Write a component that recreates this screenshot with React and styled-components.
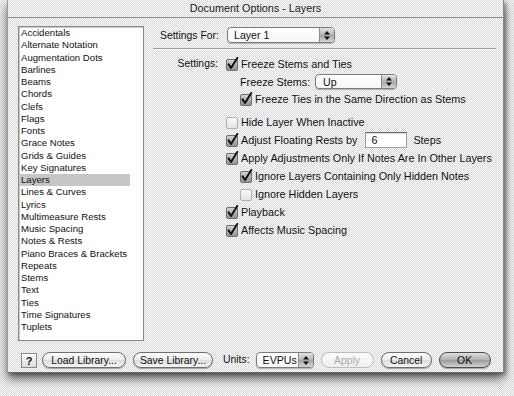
import React from "react";
import styled, { createGlobalStyle, css } from "styled-components";

const GlobalStyle = createGlobalStyle`
  html, body {
    margin: 0;
    padding: 0;
  }
  body {
    background-color: #fff;
    background-image: repeating-conic-gradient(#d2d2d2 0 25%, #fff 0 50%);
    background-size: 2px 2px;
    font-family: "Liberation Sans", Arial, sans-serif;
    color: #111;
  }
`;

const Desktop = styled.div`
  width: 514px;
  height: 396px;
  padding: 0 10px 0 7px;
  box-sizing: border-box;
`;

const Window = styled.div`
  width: 497px;
  height: 373px;
  box-sizing: border-box;
  display: flex;
  flex-direction: column;
  border-left: 1px solid #9a9a9a;
  border-right: 1px solid #8a8a8a;
  border-bottom: 1px solid #6a6a6a;
  background-color: #fff;
  background-image: repeating-conic-gradient(#d6d6d6 0 25%, #fff 0 50%);
  background-size: 2px 2px;
  box-shadow: 0 6px 10px rgba(0, 0, 0, 0.55), 2px 2px 4px rgba(0, 0, 0, 0.35);
`;

const TitleBar = styled.div`
  height: 18px;
  flex: none;
  box-sizing: border-box;
  border-bottom: 1px solid #8e8e8e;
  display: flex;
  align-items: center;
  justify-content: center;
  font-size: 10.8px;
  color: #1a1a1a;
  padding-bottom: 1px;
`;

const Main = styled.div`
  height: 323px;
  flex: none;
  box-sizing: border-box;
  display: flex;
  padding: 8px 7px 0 10px;
`;

const CategoryList = styled.div`
  width: 126px;
  height: 315px;
  box-sizing: border-box;
  background: #fff;
  border: 1px solid #8a8a8a;
  box-shadow: inset 1px 1px 0 #c8c8c8, 1px 1px 0 #e8e8e8;
  padding-top: 0;
  flex: none;
`;

const ListItem = styled.div`
  width: 111px;
  height: 12.25px;
  line-height: 12.25px;
  padding-left: 2px;
  box-sizing: border-box;
  font-size: 9.6px;
  white-space: nowrap;
  color: #111;
  ${(p) =>
    p.$selected &&
    css`
      background: #c6c6c6;
    `}
`;

const Panel = styled.div`
  flex: 1;
  margin-left: 9px;
  display: flex;
  flex-direction: column;
`;

const TopRow = styled.div`
  display: flex;
  align-items: center;
  height: 16px;
  margin-top: 1px;
  padding-left: 7px;
  font-size: 10.4px;
`;

const TopLabel = styled.span`
  width: 67px;
`;

const Separator = styled.div`
  height: 1px;
  margin-top: 5px;
  background: #9a9a9a;
  box-shadow: 0 1px 0 #fafafa;
`;

const SettingsGrid = styled.div`
  display: grid;
  grid-template-columns: 65px 1fr;
  column-gap: 8px;
  margin-top: 6px;
  font-size: 10.8px;
`;

const SideLabel = styled.div`
  text-align: right;
  height: 18px;
  line-height: 18px;
  font-size: 10.4px;
`;

const Options = styled.div`
  display: flex;
  flex-direction: column;
`;

const Row = styled.div`
  display: flex;
  align-items: center;
  height: ${(p) => p.$h || 18}px;
  margin-top: ${(p) => p.$gap || 0}px;
  padding-left: ${(p) => (p.$indent ? 14 : 0)}px;
  white-space: nowrap;
`;

const CheckLabel = styled.span`
  margin-left: 2px;
`;

const PopLabel = styled.span`
  width: 75px;
`;

const PopUpBox = styled.div`
  position: relative;
  width: ${(p) => p.$w}px;
  height: ${(p) => p.$h || 16}px;
  box-sizing: border-box;
  border: 1px solid #7c7c7c;
  border-radius: 4px;
  background: linear-gradient(#ffffff, #f6f6f6);
  box-shadow: 0 1px 1px rgba(0, 0, 0, 0.25);
  display: flex;
  align-items: center;
  overflow: hidden;
  font-size: 10.6px;
`;

const PopText = styled.span`
  flex: 1;
  padding-left: ${(p) => p.$pad || 6}px;
`;

const PopArrows = styled.div`
  width: 14px;
  height: 100%;
  border-left: 1px solid #8a8a8a;
  background: linear-gradient(#e4e4e4, #b4b4b4 50%, #a6a6a6 51%, #d4d4d4);
  display: flex;
  align-items: center;
  justify-content: center;
`;

const StepsInput = styled.div`
  width: 42px;
  height: 16px;
  box-sizing: border-box;
  border: 1px solid #a0a0a0;
  border-top-color: #6c6c6c;
  background: #fff;
  box-shadow: inset 0 1px 1px rgba(0, 0, 0, 0.15);
  padding-left: 5px;
  line-height: 14px;
  margin: 0 6px 0 8px;
`;

const Footer = styled.div`
  flex: 1;
  display: flex;
  align-items: flex-start;
  padding: 11px 0 0 13px;
  gap: 7px;
  font-size: 10.4px;
`;

const HelpButton = styled.div`
  width: 16px;
  height: 15px;
  box-sizing: border-box;
  border: 1px solid #8a8a8a;
  background: linear-gradient(#ffffff, #dcdcdc);
  font-weight: bold;
  font-size: 11px;
  display: flex;
  align-items: center;
  justify-content: center;
  margin-right: -2px;
  margin-top: 1px;
`;

const Button = styled.div`
  width: ${(p) => p.$w}px;
  height: 16px;
  box-sizing: border-box;
  border-radius: 8px;
  border: 1px solid #6e6e6e;
  background: linear-gradient(#fdfdfd, #ececec 50%, #dcdcdc 51%, #f6f6f6);
  box-shadow: 0 1px 1px rgba(0, 0, 0, 0.3);
  display: flex;
  align-items: center;
  justify-content: center;
  color: #111;
  ${(p) =>
    p.$disabled &&
    css`
      border-color: #bdbdbd;
      color: #a9a9a9;
      box-shadow: none;
      background: linear-gradient(#fbfbfb, #efefef);
    `}
  ${(p) =>
    p.$default &&
    css`
      border-color: #4e4e4e;
      background: linear-gradient(#dedede, #b0b0b0 50%, #9c9c9c 51%, #d0d0d0);
    `}
`;

const UnitsLabel = styled.span`
  margin-left: 3px;
  height: 16px;
  line-height: 16px;
  margin-right: -1px;
`;

const CheckBox = ({ checked }) => (
  <svg width="13" height="14" viewBox="0 0 13 14" style={{ flex: "none" }}>
    <defs>
      <linearGradient id="cbOn" x1="0" y1="0" x2="0" y2="1">
        <stop offset="0" stopColor="#d6d6d6" />
        <stop offset="1" stopColor="#8e8e8e" />
      </linearGradient>
      <linearGradient id="cbOff" x1="0" y1="0" x2="0" y2="1">
        <stop offset="0" stopColor="#fcfcfc" />
        <stop offset="1" stopColor="#e2e2e2" />
      </linearGradient>
    </defs>
    <rect
      x="0.5"
      y="2.5"
      width="11"
      height="11"
      rx="1.5"
      fill={checked ? "url(#cbOn)" : "url(#cbOff)"}
      stroke={checked ? "#6e6e6e" : "#b0b0b0"}
    />
    {checked && (
      <path
        d="M2.6 7.4 L5 11 L11.3 1"
        fill="none"
        stroke="#111"
        strokeWidth="2"
        strokeLinecap="round"
        strokeLinejoin="round"
      />
    )}
  </svg>
);

const Arrows = () => (
  <svg width="6" height="9" viewBox="0 0 6 9">
    <path d="M3 0 L6 3.5 L0 3.5 Z" fill="#111" />
    <path d="M3 9 L6 5.5 L0 5.5 Z" fill="#111" />
  </svg>
);

const PopUp = ({ value, w, h, pad }) => (
  <PopUpBox $w={w} $h={h}>
    <PopText $pad={pad}>{value}</PopText>
    <PopArrows>
      <Arrows />
    </PopArrows>
  </PopUpBox>
);

const Check = ({ checked, label, indent, gap, h }) => (
  <Row $indent={indent} $gap={gap} $h={h}>
    <CheckBox checked={checked} />
    <CheckLabel>{label}</CheckLabel>
  </Row>
);

const categories = [
  "Accidentals",
  "Alternate Notation",
  "Augmentation Dots",
  "Barlines",
  "Beams",
  "Chords",
  "Clefs",
  "Flags",
  "Fonts",
  "Grace Notes",
  "Grids & Guides",
  "Key Signatures",
  "Layers",
  "Lines & Curves",
  "Lyrics",
  "Multimeasure Rests",
  "Music Spacing",
  "Notes & Rests",
  "Piano Braces & Brackets",
  "Repeats",
  "Stems",
  "Text",
  "Ties",
  "Time Signatures",
  "Tuplets",
];

export default function App() {
  return (
    <>
      <GlobalStyle />
      <Desktop>
        <Window>
          <TitleBar>Document Options - Layers</TitleBar>
          <Main>
            <CategoryList>
              {categories.map((c) => (
                <ListItem key={c} $selected={c === "Layers"}>
                  {c}
                </ListItem>
              ))}
            </CategoryList>
            <Panel>
              <TopRow>
                <TopLabel>Settings For:</TopLabel>
                <PopUp value="Layer 1" w={108} />
              </TopRow>
              <Separator />
              <SettingsGrid>
                <SideLabel>Settings:</SideLabel>
                <Options>
                  <Check checked label="Freeze Stems and Ties" />
                  <Row $indent $h={17}>
                    <PopLabel>Freeze Stems:</PopLabel>
                    <PopUp value="Up" w={82} h={15} pad={7} />
                  </Row>
                  <Check checked indent label="Freeze Ties in the Same Direction as Stems" />
                  <Check label="Hide Layer When Inactive" gap={5} />
                  <Row>
                    <CheckBox checked />
                    <CheckLabel>Adjust Floating Rests by</CheckLabel>
                    <StepsInput>6</StepsInput>
                    <span>Steps</span>
                  </Row>
                  <Check checked label="Apply Adjustments Only If Notes Are In Other Layers" />
                  <Check checked indent label="Ignore Layers Containing Only Hidden Notes" />
                  <Check indent label="Ignore Hidden Layers" />
                  <Check checked label="Playback" />
                  <Check checked label="Affects Music Spacing" />
                </Options>
              </SettingsGrid>
            </Panel>
          </Main>
          <Footer>
            <HelpButton>?</HelpButton>
            <Button $w={84}>Load Library...</Button>
            <Button $w={80}>Save Library...</Button>
            <UnitsLabel>Units:</UnitsLabel>
            <PopUp value="EVPUs" w={58} />
            <Button $w={53} $disabled>
              Apply
            </Button>
            <Button $w={51}>Cancel</Button>
            <Button $w={52} $default>
              OK
            </Button>
          </Footer>
        </Window>
      </Desktop>
    </>
  );
}
